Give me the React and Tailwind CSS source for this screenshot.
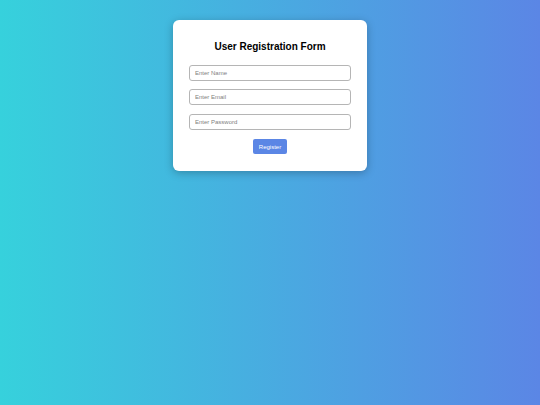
export default function App() {
  return (
    <div
      className="min-h-screen w-full flex justify-center items-start bg-[linear-gradient(to_right,#36d1dc,#5b86e5)]"
      style={{ fontFamily: '"Liberation Sans", Arial, sans-serif' }}
    >
      <div className="mt-[20px] w-[194px] bg-white rounded-[6px] shadow-[0_2px_8px_rgba(0,0,0,0.25)] px-4 pt-[21px] pb-[17px] flex flex-col items-center">
        <h2 className="text-[10px] leading-[12px] font-bold text-black mb-[12px]">
          User Registration Form
        </h2>
        <form className="w-full flex flex-col items-center" onSubmit={(e) => e.preventDefault()}>
          <input
            type="text"
            placeholder="Enter Name"
            className="w-full h-[16px] border border-[#b5b5b5] rounded-[3px] px-[5px] text-[6px] placeholder:text-[#808080] outline-none mb-[8px]"
          />
          <input
            type="email"
            placeholder="Enter Email"
            className="w-full h-[16px] border border-[#b5b5b5] rounded-[3px] px-[5px] text-[6px] placeholder:text-[#808080] outline-none mb-[9px]"
          />
          <input
            type="password"
            placeholder="Enter Password"
            className="w-full h-[16px] border border-[#b5b5b5] rounded-[3px] px-[5px] text-[6px] placeholder:text-[#808080] outline-none mb-[9px]"
          />
          <button
            type="submit"
            className="w-[34px] h-[15px] rounded-[2px] bg-[#5b86e5] text-white text-[6px] leading-none"
          >
            Register
          </button>
        </form>
      </div>
    </div>
  );
}
